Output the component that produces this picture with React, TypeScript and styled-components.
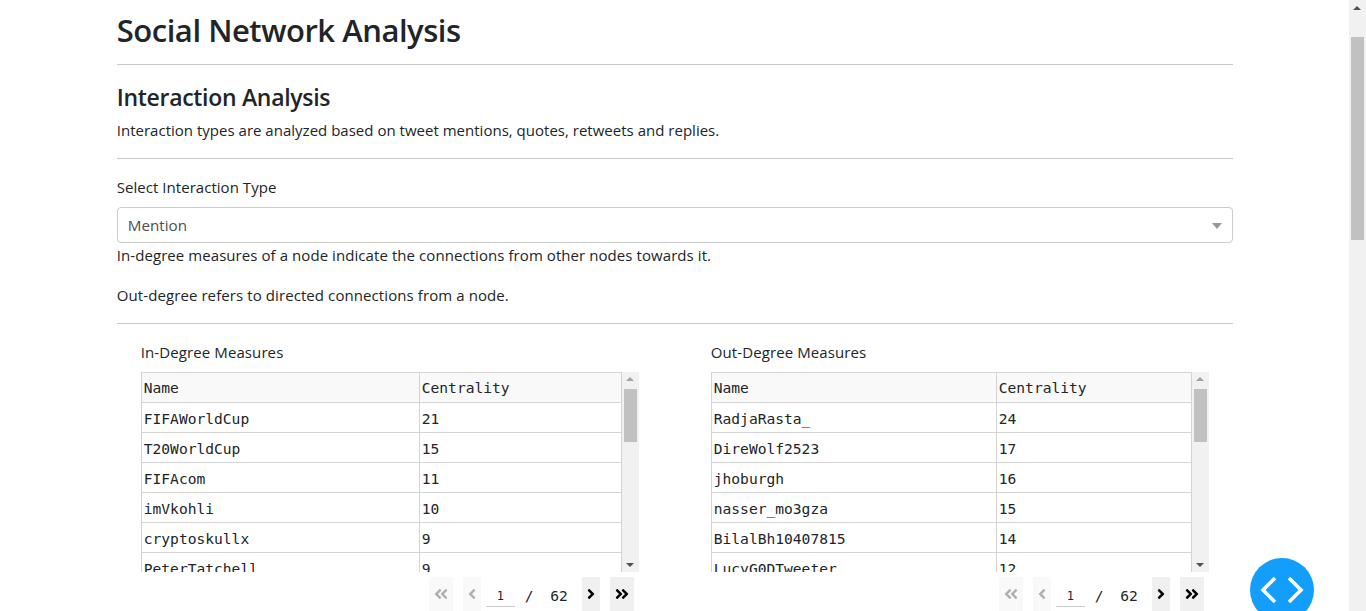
import React from 'react'
import styled, { createGlobalStyle } from 'styled-components'
import {
  FaAngleDoubleLeft,
  FaAngleDoubleRight,
  FaAngleLeft,
  FaAngleRight,
} from 'react-icons/fa'

const GlobalStyle = createGlobalStyle`
  html, body {
    margin: 0;
    height: 611px;
    overflow: hidden;
    background: #fff;
  }
  body {
    font-family: "Open Sans", "Noto Sans", sans-serif;
    color: #212529;
  }
`

const Shell = styled.div`
  display: flex;
  height: 611px;
  overflow: hidden;
`

const Main = styled.main`
  flex: 1;
  min-width: 0;
  overflow: hidden;
`

const Container = styled.div`
  width: 1116px;
  margin: 0 auto;
  padding-left: 0.5px;
`

const Title = styled.h1`
  margin: 0;
  padding-top: 10px;
  font-size: 31px;
  font-weight: 600;
  line-height: 40px;
  height: 54px;
  letter-spacing: -0.47px;
`

const Rule = styled.hr<{ $after: number }>`
  margin: 0 0 ${(p) => p.$after}px;
  border: 0;
  border-top: 1px solid #c8c8c8;
`

const Heading = styled.h2`
  margin: 0 0 5px;
  font-size: 23px;
  font-weight: 600;
  line-height: 32px;
  letter-spacing: -0.3px;
`

const Text = styled.p<{ $gap?: number; $track?: number }>`
  margin: 0 0 ${(p) => p.$gap ?? 0}px;
  font-size: 15px;
  line-height: 24px;
  letter-spacing: ${(p) => p.$track ?? 0}px;
`

const SelectBox = styled.div`
  box-sizing: border-box;
  height: 36px;
  margin-top: 8px;
  padding: 0 10px;
  display: flex;
  align-items: center;
  justify-content: space-between;
  border: 1px solid #ccc;
  border-radius: 4px;
  font-size: 15.2px;
  color: #495057;
`

const Caret = styled.span`
  width: 0;
  height: 0;
  border-left: 5px solid transparent;
  border-right: 5px solid transparent;
  border-top: 6px solid #999;
  margin-top: 2px;
`

const Columns = styled.div`
  display: grid;
  grid-template-columns: 498px 498px;
  column-gap: 72px;
  padding: 0 24px;
`

const TableTitle = styled.div`
  margin: -1px 0 10px;
  font-size: 15px;
  line-height: 20px;
  letter-spacing: 0.1px;
`

const Grid = styled.div`
  display: flex;
  height: 200px;
  overflow: hidden;
`

const Table = styled.table`
  flex: 1;
  height: 0;
  border-collapse: collapse;
  table-layout: fixed;
  font-family: "DejaVu Sans Mono", "Liberation Mono", monospace;
  font-size: 14.6px;
  color: #212529;
`

const HeadCell = styled.th<{ $width?: number }>`
  box-sizing: border-box;
  width: ${(p) => (p.$width ? `${p.$width}px` : 'auto')};
  height: 30px;
  padding: 0 2px;
  border: 1px solid #d4d4d4;
  background: #f9f9f9;
  font-weight: 400;
  text-align: left;
`

const Cell = styled.td`
  box-sizing: border-box;
  height: 30px;
  padding: 1px 2px 0;
  border: 1px solid #d4d4d4;
`

const Track = styled.div`
  position: relative;
  width: 17px;
  flex: none;
  background: #f1f1f1;
`

const Thumb = styled.div<{ $top: number; $height: number }>`
  position: absolute;
  left: 2px;
  right: 2px;
  top: ${(p) => p.$top}px;
  height: ${(p) => p.$height}px;
  background: #c1c1c1;
`

const Arrow = styled.span<{ $down?: boolean }>`
  position: absolute;
  left: 4px;
  ${(p) => (p.$down ? 'bottom: 5px;' : 'top: 5px;')}
  width: 0;
  height: 0;
  border-left: 4px solid transparent;
  border-right: 4px solid transparent;
  ${(p) => (p.$down ? 'border-top: 4px solid #505050;' : 'border-bottom: 4px solid #a3a3a3;')}
`

const Pager = styled.div`
  display: flex;
  justify-content: flex-end;
  align-items: flex-start;
  padding: 5px 5px 0 0;
  font-family: "DejaVu Sans Mono", "Liberation Mono", monospace;
`

const PageButton = styled.button<{ $off?: boolean; $wide?: boolean; $gap?: number }>`
  box-sizing: border-box;
  width: ${(p) => (p.$wide ? 24 : 18)}px;
  height: 34px;
  padding: 0;
  border: 0;
  margin-right: ${(p) => p.$gap ?? 0}px;
  display: flex;
  align-items: center;
  justify-content: center;
  font-size: 16px;
  background: ${(p) => (p.$off ? '#f9f9f9' : '#f0f0f0')};
  color: ${(p) => (p.$off ? '#b0b0b0' : '#000')};
`

const PageInput = styled.div`
  box-sizing: border-box;
  width: 29px;
  height: 30px;
  margin-left: 5px;
  padding-top: 9px;
  border-bottom: 1px solid #ccc;
  text-align: center;
  font-size: 12px;
  line-height: 20px;
`

const PageInfo = styled.div`
  display: flex;
  width: 67px;
  height: 34px;
  align-items: center;
  justify-content: space-between;
  padding: 2px 14px 0 10px;
  box-sizing: border-box;
  font-size: 14.6px;
`

const ScrollBar = styled.aside`
  position: relative;
  width: 17px;
  flex: none;
  background: #f1f1f1;
`

const PageThumb = styled.div`
  position: absolute;
  left: 2px;
  right: 2px;
  top: 37px;
  height: 203px;
  background: #c1c1c1;
`

const PageArrow = styled.span`
  position: absolute;
  left: 4px;
  top: 6px;
  width: 0;
  height: 0;
  border-left: 4px solid transparent;
  border-right: 4px solid transparent;
  border-bottom: 4px solid #505050;
`

const Fab = styled.button`
  position: absolute;
  left: 1250px;
  top: 558px;
  width: 64px;
  height: 64px;
  padding: 0;
  border: 0;
  border-radius: 50%;
  background: #149efc;
`

type Row = [string, number]

const inDegree: Row[] = [
  ['FIFAWorldCup', 21],
  ['T20WorldCup', 15],
  ['FIFAcom', 11],
  ['imVkohli', 10],
  ['cryptoskullx', 9],
  ['PeterTatchell', 9],
]

const outDegree: Row[] = [
  ['RadjaRasta_', 24],
  ['DireWolf2523', 17],
  ['jhoburgh', 16],
  ['nasser_mo3gza', 15],
  ['BilalBh10407815', 14],
  ['LucyG0DTweeter', 12],
]

function Measure({ title, rows, nameWidth }: { title: string; rows: Row[]; nameWidth: number }) {
  return (
    <section>
      <TableTitle>{title}</TableTitle>
      <Grid>
        <Table>
          <thead>
            <tr>
              <HeadCell $width={nameWidth}>Name</HeadCell>
              <HeadCell>Centrality</HeadCell>
            </tr>
          </thead>
          <tbody>
            {rows.map(([name, value]) => (
              <tr key={name}>
                <Cell>{name}</Cell>
                <Cell>{value}</Cell>
              </tr>
            ))}
          </tbody>
        </Table>
        <Track>
          <Arrow />
          <Thumb $top={17} $height={53} />
          <Arrow $down />
        </Track>
      </Grid>
      <Pager>
        <PageButton $off $wide $gap={10}>
          <FaAngleDoubleLeft />
        </PageButton>
        <PageButton $off>
          <FaAngleLeft />
        </PageButton>
        <PageInput>1</PageInput>
        <PageInfo>
          <span>/</span>
          <span>62</span>
        </PageInfo>
        <PageButton $gap={10}>
          <FaAngleRight />
        </PageButton>
        <PageButton $wide>
          <FaAngleDoubleRight />
        </PageButton>
      </Pager>
    </section>
  )
}

export default function App() {
  return (
    <Shell>
      <GlobalStyle />
      <Main>
        <Container>
          <Title>Social Network Analysis</Title>
          <Rule $after={16} />
          <Heading>Interaction Analysis</Heading>
          <Text $gap={16} $track={0.012}>
            Interaction types are analyzed based on tweet mentions, quotes, retweets and replies.
          </Text>
          <Rule $after={16} />
          <Text $track={0.04}>Select Interaction Type</Text>
          <SelectBox>
            Mention
            <Caret />
          </SelectBox>
          <Text $gap={16} $track={0.07}>
            In-degree measures of a node indicate the connections from other nodes towards it.
          </Text>
          <Text $gap={16} $track={0.09}>
            Out-degree refers to directed connections from a node.
          </Text>
          <Rule $after={19} />
          <Columns>
            <Measure title="In-Degree Measures" rows={inDegree} nameWidth={278} />
            <Measure title="Out-Degree Measures" rows={outDegree} nameWidth={285} />
          </Columns>
        </Container>
      </Main>
      <ScrollBar>
        <PageArrow />
        <PageThumb />
      </ScrollBar>
      <Fab aria-label="toggle code">
        <svg width="64" height="64" viewBox="0 0 64 64" fill="none" stroke="#fff" strokeWidth="3.6">
          <polyline points="25,20 13,32 25,44" />
          <polyline points="39,20 51,32 39,44" />
        </svg>
      </Fab>
    </Shell>
  )
}
